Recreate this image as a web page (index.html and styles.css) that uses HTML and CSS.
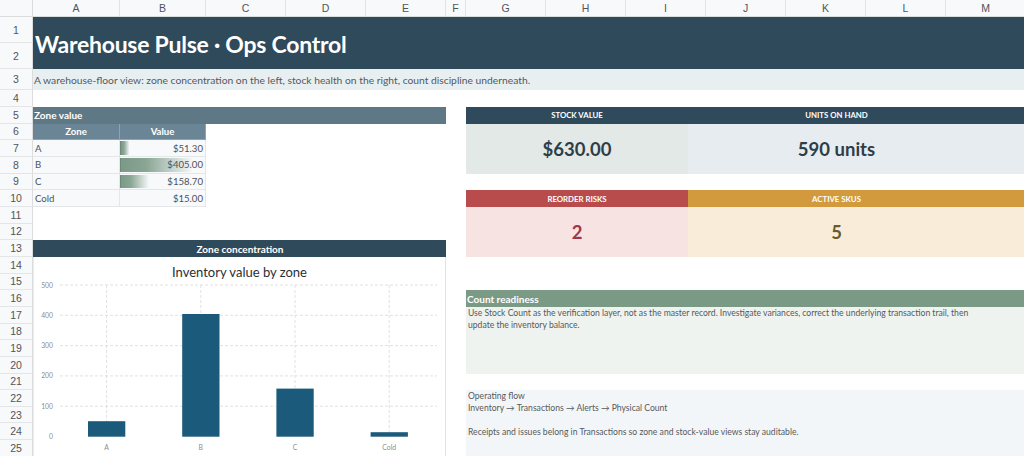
FILE: index.html
```html
<!DOCTYPE html>
<html lang="en">
<head>
<meta charset="utf-8">
<title>Warehouse Pulse · Ops Control</title>
<link rel="stylesheet" href="styles.css">
</head>
<body>
<div class="sheet">
  <div class="corner"></div>
  <div class="colheads">
    <div class="ch">A</div><div class="ch">B</div><div class="ch">C</div><div class="ch">D</div><div class="ch">E</div><div class="ch">F</div><div class="ch">G</div><div class="ch">H</div><div class="ch">I</div><div class="ch">J</div><div class="ch">K</div><div class="ch">L</div><div class="ch">M</div>
  </div>
  <div class="rowheads">
    <div class="rh">1</div><div class="rh">2</div><div class="rh">3</div><div class="rh">4</div><div class="rh">5</div><div class="rh">6</div><div class="rh">7</div><div class="rh">8</div><div class="rh">9</div><div class="rh">10</div><div class="rh">11</div><div class="rh">12</div><div class="rh">13</div><div class="rh">14</div><div class="rh">15</div><div class="rh">16</div><div class="rh">17</div><div class="rh">18</div><div class="rh">19</div><div class="rh">20</div><div class="rh">21</div><div class="rh">22</div><div class="rh">23</div><div class="rh">24</div><div class="rh">25</div>
  </div>

  <div class="title">Warehouse Pulse · Ops Control</div>
  <div class="subtitle">A warehouse-floor view: zone concentration on the left, stock health on the right, count discipline underneath.</div>

  <div class="band zone-band">Zone value</div>
  <div class="th th-zone">Zone</div>
  <div class="th th-value">Value</div>

  <div class="td td-a r7">A</div>
  <div class="td td-b r7"><span class="bar" style="width:11px"></span><span class="num">$51.30</span></div>
  <div class="td td-a r8">B</div>
  <div class="td td-b r8"><span class="bar" style="width:86px"></span><span class="num">$405.00</span></div>
  <div class="td td-a r9">C</div>
  <div class="td td-b r9"><span class="bar" style="width:34px"></span><span class="num">$158.70</span></div>
  <div class="td td-a r10">Cold</div>
  <div class="td td-b r10"><span class="num">$15.00</span></div>

  <div class="band conc-band">Zone concentration</div>
  <div class="chart">
    <svg class="chart-svg" width="413" height="200" viewBox="0 0 413 200">
      <text class="chart-title" x="206.5" y="19.5" text-anchor="middle">Inventory value by zone</text>
      <g class="grid">
        <line x1="27" y1="28" x2="404" y2="28"/>
        <line x1="27" y1="58.3" x2="404" y2="58.3"/>
        <line x1="27" y1="88.6" x2="404" y2="88.6"/>
        <line x1="27" y1="118.9" x2="404" y2="118.9"/>
        <line x1="27" y1="149.2" x2="404" y2="149.2"/>
        <line x1="73.6" y1="28" x2="73.6" y2="179.7"/>
        <line x1="167.8" y1="28" x2="167.8" y2="179.7"/>
        <line x1="262" y1="28" x2="262" y2="179.7"/>
        <line x1="356.2" y1="28" x2="356.2" y2="179.7"/>
      </g>
      <g class="ylab">
        <text x="20" y="30.5" text-anchor="end">500</text>
        <text x="20" y="60.8" text-anchor="end">400</text>
        <text x="20" y="91.1" text-anchor="end">300</text>
        <text x="20" y="121.4" text-anchor="end">200</text>
        <text x="20" y="151.7" text-anchor="end">100</text>
        <text x="20" y="182.2" text-anchor="end">0</text>
      </g>
      <g class="bars">
        <rect x="55" y="164.2" width="37.3" height="15.5"/>
        <rect x="149.2" y="57" width="37.3" height="122.7"/>
        <rect x="243.4" y="131.6" width="37.3" height="48.1"/>
        <rect x="337.6" y="175.2" width="37.3" height="4.5"/>
      </g>
      <g class="xlab">
        <text x="73.6" y="192.5" text-anchor="middle">A</text>
        <text x="167.8" y="192.5" text-anchor="middle">B</text>
        <text x="262" y="192.5" text-anchor="middle">C</text>
        <text x="356.2" y="192.5" text-anchor="middle">Cold</text>
      </g>
    </svg>
  </div>

  <div class="kpi-block kb-top">
    <div class="kpi-head kh-dark">STOCK VALUE</div>
    <div class="kpi-head kh-dark kpi-right">UNITS ON HAND</div>
    <div class="kpi-val kv-stock">$630.00</div>
    <div class="kpi-val kv-units kpi-right">590 units</div>
  </div>

  <div class="kpi-block kb-bottom">
    <div class="kpi-head kh-reorder">REORDER RISKS</div>
    <div class="kpi-head kh-active kpi-right">ACTIVE SKUS</div>
    <div class="kpi-val kv-reorder">2</div>
    <div class="kpi-val kv-active kpi-right">5</div>
  </div>

  <div class="band count-band">Count readiness</div>
  <div class="note count-body">Use Stock Count as the verification layer, not as the master record. Investigate variances, correct the underlying transaction trail, then update the inventory balance.</div>
  <div class="note flow-body">Operating flow<br>Inventory → Transactions → Alerts → Physical Count<br><br>Receipts and issues belong in Transactions so zone and stock-value views stay auditable.</div>
</div>
</body>
</html>
```

FILE: styles.css
```css
html, body {
  margin: 0;
  padding: 0;
  background: #ffffff;
  overflow: hidden;
}

.sheet {
  width: 1024px;
  height: 456px;
  overflow: hidden;
  display: grid;
  grid-template-columns: 33px 87px 86px 80px 80px 80px 20px 80px 80px 80px 80px 80px 80px 80px;
  grid-template-rows: 17px 26px 26px 21px 17px repeat(21, 16.667px);
  font-family: "Lato", "Open Sans", sans-serif;
  color: #4a4f54;
}

.corner {
  grid-column: 1;
  grid-row: 1;
  background: #f8f9fa;
  border-right: 1px solid #dcdcdc;
  border-bottom: 1px solid #dcdcdc;
  box-sizing: border-box;
}

.colheads {
  grid-column: 2 / -1;
  grid-row: 1;
  display: grid;
  grid-template-columns: 87px 86px 80px 80px 80px 20px 80px 80px 80px 80px 80px 80px 80px;
  background: #f8f9fa;
}

.ch {
  font-family: "Liberation Sans", Arial, sans-serif;
  font-size: 10.5px;
  color: #505459;
  display: flex;
  align-items: center;
  justify-content: center;
  border-right: 1px solid #e2e3e5;
  border-bottom: 1px solid #dcdcdc;
  box-sizing: border-box;
}

.rowheads {
  grid-column: 1;
  grid-row: 2 / -1;
  display: grid;
  grid-template-rows: 26px 26px 21px 17px repeat(21, 16.667px);
  background: #f8f9fa;
}

.rh {
  font-family: "Liberation Sans", Arial, sans-serif;
  font-size: 10.5px;
  color: #505459;
  display: flex;
  align-items: center;
  justify-content: center;
  border-right: 1px solid #dcdcdc;
  border-bottom: 1px solid #e4e5e7;
  box-sizing: border-box;
}

.title {
  grid-column: 2 / -1;
  grid-row: 2 / 4;
  background: #2f4a5b;
  color: #ffffff;
  font-weight: 700;
  font-size: 23px;
  letter-spacing: -0.25px;
  display: flex;
  align-items: center;
  padding: 2px 0 0 2px;
  white-space: nowrap;
}

.subtitle {
  grid-column: 2 / -1;
  grid-row: 4;
  background: #e8eff1;
  color: #55595d;
  font-size: 10.3px;
  display: flex;
  align-items: center;
  padding-left: 1px;
  white-space: nowrap;
}

.band {
  color: #ffffff;
  font-weight: 700;
  font-size: 10px;
  display: flex;
  align-items: center;
  padding-left: 1px;
  white-space: nowrap;
}

.zone-band {
  grid-column: 2 / 7;
  grid-row: 6;
  background: #5e7886;
}

.conc-band {
  grid-column: 2 / 7;
  grid-row: 14;
  background: #2f4a5b;
  justify-content: center;
}

.th {
  grid-row: 7;
  background: #6a8696;
  color: #ffffff;
  font-weight: 700;
  font-size: 9.6px;
  display: flex;
  align-items: center;
  justify-content: center;
  border-right: 1px solid #8ea3af;
  border-bottom: 1px solid #8ea3af;
}

.th-zone { grid-column: 2; }
.th-value { grid-column: 3; }

.td {
  background: #f7f9fa;
  font-size: 9.6px;
  color: #4d5257;
  display: flex;
  align-items: center;
  border-right: 1px solid #e3e7ea;
  border-bottom: 1px solid #e3e7ea;
  box-sizing: border-box;
  position: relative;
}

.td-a { grid-column: 2; padding-left: 2px; }
.td-b { grid-column: 3; justify-content: flex-end; padding-right: 2px; }

.r7 { grid-row: 8; }
.r8 { grid-row: 9; }
.r9 { grid-row: 10; }
.r10 { grid-row: 11; }

.bar {
  position: absolute;
  left: 0;
  top: 1px;
  bottom: 1px;
  box-sizing: border-box;
  background: linear-gradient(to right, #7a9986 0%, #8aa695 30%, rgba(255, 255, 255, 0) 85%);
  border-left: 1px solid #6b8a77;
}

.num { position: relative; }

.chart {
  grid-column: 2 / 7;
  grid-row: 15 / 27;
  background: #ffffff;
  border-right: 1px solid #e2e2e2;
  border-left: 1px solid #ececec;
  box-sizing: border-box;
  overflow: hidden;
}

.chart-svg {
  display: block;
  margin-left: -1px;
}

.chart-title {
  font-family: "Lato", sans-serif;
  font-size: 13px;
  fill: #2b2f33;
}

.grid line {
  stroke: #d9d9d9;
  stroke-width: 0.8;
  stroke-dasharray: 3 2;
}

.ylab text, .xlab text {
  font-family: "Lato", sans-serif;
  font-size: 6.8px;
  fill: #8a8e92;
}

.bars rect { fill: #1c5a7b; }

.kpi-block {
  grid-column: 8 / -1;
  display: grid;
  grid-template-columns: 222px 1fr;
  grid-template-rows: 16.667px 1fr;
}

.kb-top { grid-row: 6 / 10; }
.kb-bottom { grid-row: 11 / 15; }

.kpi-right { padding-right: 41px; }

.kpi-head {
  color: #ffffff;
  font-weight: 700;
  font-size: 7.8px;
  display: flex;
  align-items: center;
  justify-content: center;
  white-space: nowrap;
}

.kh-dark { background: #2f4a5b; }
.kh-reorder { background: #b84c4d; }
.kh-active { background: #d29a3c; }

.kpi-val {
  font-weight: 700;
  font-size: 18.5px;
  color: #2f3d47;
  display: flex;
  align-items: center;
  justify-content: center;
}

.kv-stock { background: #e3e9e7; }
.kv-units { background: #e6ecf0; }
.kv-reorder { background: #f8e3e3; color: #a1364a; }
.kv-active { background: #f9ecd9; color: #6a5a2c; }

.count-band {
  grid-column: 8 / -1;
  grid-row: 17;
  background: #7b9a86;
}

.note {
  font-size: 8.6px;
  line-height: 12px;
  color: #55595d;
  padding: 0 41px 0 2px;
}

.count-body {
  grid-column: 8 / -1;
  grid-row: 18 / 22;
  background: #eef3ef;
}

.flow-body {
  grid-column: 8 / -1;
  grid-row: 23 / 27;
  background: #f3f6f8;
}
```
